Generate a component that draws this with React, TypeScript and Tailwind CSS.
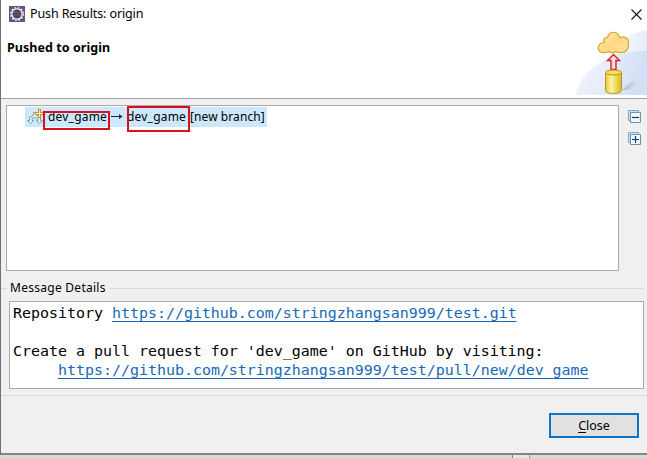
import React from "react";

function EclipseIcon() {
  return (
    <svg className="h-4 w-4 shrink-0" viewBox="0 0 16 16">
      <rect width="16" height="16" fill="#625680" />
      <circle cx="8" cy="8" r="6.3" fill="none" stroke="#eeebf3" strokeWidth="1.6" strokeDasharray="1.6 1.7" />
      <circle cx="8" cy="8" r="5.2" fill="#4b4558" stroke="#f3f1f5" strokeWidth="1.3" />
      <path d="M4 6.5h8M4 9h8" stroke="#67617a" strokeWidth="1" />
    </svg>
  );
}

function PushBanner() {
  return (
    <svg className="h-[67px] w-[72px] shrink-0" viewBox="0 0 72 67">
      <defs>
        <linearGradient id="sweep" x1="0" y1="0" x2="1" y2="0.2">
          <stop offset="0" stopColor="#f1f5fd" />
          <stop offset="0.5" stopColor="#e6ecfb" />
          <stop offset="1" stopColor="#d3dff6" />
        </linearGradient>
        <linearGradient id="sweepTop" x1="0" y1="0" x2="1" y2="0">
          <stop offset="0" stopColor="#ffffff" />
          <stop offset="0.5" stopColor="#fafbff" />
          <stop offset="1" stopColor="#e5ecfa" />
        </linearGradient>
        <linearGradient id="shade" x1="0" y1="0" x2="1" y2="0">
          <stop offset="0" stopColor="#b4bacb" />
          <stop offset="1" stopColor="#dae2f4" />
        </linearGradient>
        <linearGradient id="can" x1="0" y1="0" x2="1" y2="0">
          <stop offset="0" stopColor="#e6c536" />
          <stop offset="0.35" stopColor="#fff59b" />
          <stop offset="1" stopColor="#dfb51c" />
        </linearGradient>
        <linearGradient id="cloud" x1="0" y1="0" x2="1" y2="1">
          <stop offset="0" stopColor="#ffedbb" />
          <stop offset="0.5" stopColor="#ffd883" />
          <stop offset="1" stopColor="#ffe4a0" />
        </linearGradient>
      </defs>
      <path d="M1 67C4 38 36 10 72 2V67Z" fill="url(#sweepTop)" />
      <path d="M1 67C5 42 35 22 72 23V67Z" fill="url(#sweep)" />
      <path d="M47 62l9-8 8-1 1 1-11 8Z" fill="url(#shade)" />
      <path d="M27 24.500C22 24 21.500 15 29 14.500C28 11 29.500 9.500 32.500 9.500C34 2.500 42.500 2.500 44.500 9.500C50 7.500 54 10.500 53.500 16C54 21 51 24.500 46.500 24.500C44.500 25 42.500 24.500 41 23.500C38.500 25 35.500 25 33.500 23.500C31.500 25 29.500 25 27 24.500Z" fill="url(#cloud)" stroke="#d6a32c" strokeWidth="1.2" />
      <path d="M38.500 26.500l-6 6h3.500v9h5v-9h3.500Z" fill="#fbdede" stroke="#d11f2c" strokeWidth="1.4" />
      <path d="M30.500 44.500V62.500C31 66.500 46 66.500 46.500 62.500V44.500Z" fill="url(#can)" stroke="#bc951b" />
      <ellipse cx="38.500" cy="44.500" rx="8" ry="2.500" fill="#f7dd56" stroke="#bc951b" />
    </svg>
  );
}

function TreeToolIcon({ plus = false }: { plus?: boolean }) {
  return (
    <svg className="h-[14px] w-[14px]" viewBox="0 0 14 14">
      <path d="M.5 .5h10v10H.5Z" fill="#c6e2f5" stroke="#87a8c5" />
      <path d="M2.500 2.500h10v10h-10Z" fill="#edf8ff" stroke="#718eae" />
      <path d={plus ? "M4 7.500h7M7.500 4v7" : "M4 7.500h7"} stroke="#173b65" strokeWidth="1.2" />
    </svg>
  );
}

function BranchIcon() {
  return (
    <svg className="h-4 w-4 shrink-0" viewBox="0 0 16 16">
      <path d="M6.500 3.500h3v3l4 2v3h2l-3 3-3-3h1.500v-2L8 8.500 5 9.500v2h1.500l-3 3-3-3h2v-3l4-2Z" fill="#e6f5f7" stroke="#7ba2ad" />
      <path d="M11 0h3v3h3v3h-3v3h-3v-3h-3v-3h3Z" fill="#c99128" />
      <path d="M12 1h1v3h3v1h-3v3h-1v-3h-3v-1h3Z" fill="#fff0a8" />
    </svg>
  );
}

const link = "text-[#1769b8] underline decoration-1 underline-offset-[3px] [text-decoration-skip-ink:none]";

export default function App() {
  return (
    <div className="flex h-[458px] w-[647px] flex-col overflow-hidden bg-[#dadada] font-['Noto_Sans','Open_Sans',sans-serif] text-[12px] leading-4 text-black">
      <div className="flex h-[455px] flex-col border-b-2 border-l border-b-[#858585] border-l-[#747079] bg-[#f0f0f0]">
        <header className="flex h-[99px] shrink-0 flex-col border-b border-[#a0a0a0] bg-white">
          <div className="flex h-7 items-center pl-2 pr-[5px]">
            <EclipseIcon />
            <h1 className="ml-[5px] whitespace-nowrap text-[12.500px] tracking-[-0.12px]">Push Results: origin</h1>
            <svg className="ml-auto h-[11px] w-[11px]" viewBox="0 0 11 11"><path d="M.5 .5l10 10M10.500 .5l-10 10" stroke="#111" strokeWidth="1.100" /></svg>
          </div>
          <div className="flex justify-between">
            <h2 className="mt-[12px] whitespace-nowrap pl-[6px] text-[12.500px] font-bold tracking-[0.05px]">Pushed to origin</h2>
            <PushBanner />
          </div>
        </header>

        <main className="flex h-[182px] shrink-0 pl-[5px] pt-[6px]">
          <div className="h-[166px] w-[613px] border border-[#aaa] bg-white pl-[18px] pt-px">
            <div className="flex h-5 w-[242px] items-center bg-[#cce8ff]">
              <div className="ml-[2px]"><BranchIcon /></div>
              <div className="relative ml-[5px] w-[59px] whitespace-nowrap">
                <span className="tracking-[0.2px]">dev_game</span>
                <i className="absolute -left-[5px] top-[2px] h-[19px] w-[67px] border-2 border-[#dc1018]" />
              </div>
              <svg className="ml-[4px] h-3 w-3" viewBox="0 0 12 12"><path d="M0 5.500h10" stroke="#172a39" /><path d="M8 3l3.500 2.500L8 8Z" fill="#172a39" /></svg>
              <div className="relative ml-[4px] w-[63px] whitespace-nowrap">
                <span className="tracking-[0.2px]">dev_game</span>
                <i className="absolute left-0 -top-[3px] h-[26px] w-[63px] border-2 border-[#dc1018]" />
              </div>
              <span className="whitespace-nowrap tracking-[0.08px]">[new branch]</span>
            </div>
          </div>
          <div className="ml-[9px] flex flex-col gap-[8px] pt-[5px]">
            <TreeToolIcon />
            <TreeToolIcon plus />
          </div>
        </main>

        <section className="h-[115px] shrink-0 border-b border-[#dadada] pr-[3px]">
          <div className="flex h-[14px] items-center">
            <i className="h-px w-[6px] bg-[#dadada]" />
            <h3 className="mx-[3px] whitespace-nowrap tracking-[0.27px]">Message Details</h3>
            <i className="h-px flex-1 bg-[#dadada]" />
          </div>
          <div className="ml-[8px] mt-[6px] h-[88px] border border-[#aaa] bg-white pl-[3px] pt-[2px] font-['DejaVu_Sans_Mono',monospace] text-[14.950px] leading-[19px]">
            <p className="whitespace-pre">Repository <a className={link}>https://github.com/stringzhangsan999/test.git</a></p>
            <p className="mt-[19px] whitespace-pre">Create a pull request for 'dev_game' on GitHub by visiting:</p>
            <p className="whitespace-pre pl-[45px]"><a className={link}>https://github.com/stringzhangsan999/test/pull/new/dev_game</a></p>
          </div>
        </section>

        <footer className="flex justify-end pr-[8px] pt-[17px]">
          <button className="flex h-[25px] w-[90px] items-center justify-center border-2 border-[#0f74c6] bg-[#e1e1e1] text-[12.500px]"><span><u className="underline-offset-2">C</u>lose</span></button>
        </footer>
      </div>
      <div className="flex h-[3px]"><i className="w-[513px] border-r border-[#888]" /><i className="w-[17px] border-r border-[#999] bg-[#e7e7e7]" /></div>
    </div>
  );
}
